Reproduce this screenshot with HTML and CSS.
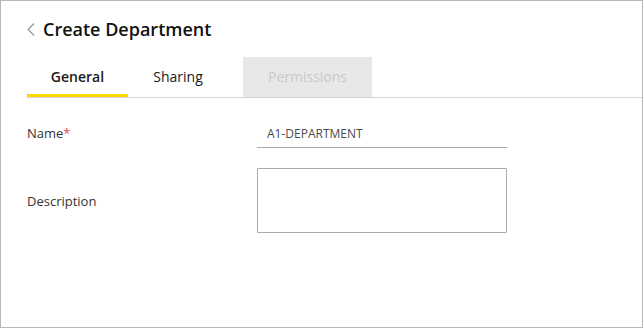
FILE: index.html
```html
<!DOCTYPE html>
<html lang="en">
<head>
<meta charset="utf-8">
<title>Create Department</title>
<link rel="stylesheet" href="styles.css">
</head>
<body>
<div class="page">
  <header class="header">
    <svg class="back" width="8" height="13" viewBox="0 0 8 13" aria-hidden="true">
      <polyline points="7,0.5 1.2,6.5 7,12.5" fill="none" stroke="#9a9a9a" stroke-width="1.3"/>
    </svg>
    <h1 class="title">Create Department</h1>
  </header>
  <nav class="tabs">
    <div class="tab tab-general active">General</div>
    <div class="tab tab-sharing">Sharing</div>
    <div class="tab tab-perm disabled">Permissions</div>
  </nav>
  <form class="form">
    <label class="label">Name<span class="req">*</span></label>
    <input class="input" type="text" value="A1-DEPARTMENT">
    <label class="label">Description</label>
    <textarea class="textarea"></textarea>
  </form>
</div>
</body>
</html>
```
FILE: styles.css
```css
html, body {
  margin: 0;
  padding: 0;
  background: #fff;
}
.page {
  width: 643px;
  height: 328px;
  box-sizing: border-box;
  border: 1px solid #b8b8b8;
  background: #fff;
  font-family: "Open Sans", "Liberation Sans", sans-serif;
  color: #333;
}
.header {
  display: flex;
  align-items: center;
  padding: 16px 0 0 26px;
}
.back {
  display: block;
  margin-right: 8px;
}
.title {
  margin: 0;
  font-size: 18px;
  line-height: 24px;
  font-weight: 600;
  color: #111;
}
.tabs {
  display: flex;
  margin: 16px 0 0 26px;
  border-bottom: 1px solid #d4d4d4;
}
.tab {
  box-sizing: border-box;
  height: 40px;
  padding-top: 10px;
  font-size: 14px;
  line-height: 20px;
  text-align: center;
  color: #1a1a1a;
  border-bottom: 3px solid transparent;
}
.tab-general { width: 101px; font-weight: 600; }
.tab-sharing { width: 100px; }
.tab-perm { width: 129px; margin-left: 15px; }
.tab.active { border-bottom-color: #ffd800; }
.tab.disabled {
  background: #e8e8e8;
  color: #c8c8c8;
}
.form {
  display: grid;
  grid-template-columns: 230px 250px;
  row-gap: 20px;
  align-items: center;
  margin: 20px 0 0 26px;
}
.label {
  font-size: 13px;
  line-height: 18px;
  color: #333;
}
.req {
  color: #e5484d;
}
.input {
  box-sizing: border-box;
  width: 250px;
  height: 30px;
  margin: 0;
  padding: 2px 10px 0;
  border: none;
  border-bottom: 1px solid #aaa;
  outline: none;
  font-family: "Open Sans", "Liberation Sans", sans-serif;
  font-size: 12px;
  color: #4a4a4a;
  background: transparent;
}
.textarea {
  display: block;
  box-sizing: border-box;
  width: 250px;
  height: 65px;
  margin: 0;
  padding: 4px 8px;
  border: 1px solid #aaa;
  border-radius: 1px;
  resize: none;
  outline: none;
  font-family: "Open Sans", "Liberation Sans", sans-serif;
  font-size: 12px;
}
```
